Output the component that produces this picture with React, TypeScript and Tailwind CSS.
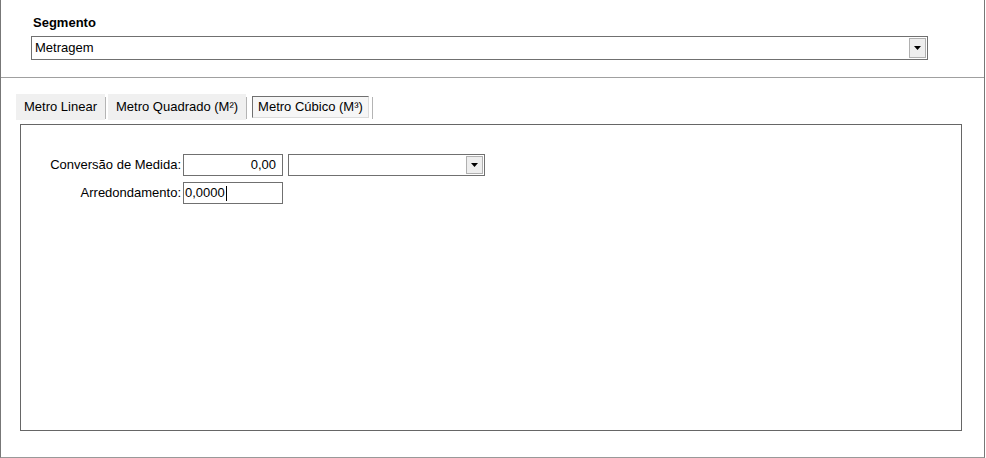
import React from "react";

function Arrow() {
  return (
    <svg width="7" height="4" viewBox="0 0 7 4">
      <path d="M0 0h7L3.5 4z" fill="#000" />
    </svg>
  );
}

function SelectBox({ value, className }: { value?: string; className: string }) {
  return (
    <div className={`flex items-stretch border border-[#707070] bg-white ${className}`}>
      <div className="flex flex-1 items-center pl-[3px] text-[13px] text-black">{value}</div>
      <div className="m-px flex w-[17px] items-center justify-center border border-[#b0b0b0] bg-[#eeeeee]">
        <Arrow />
      </div>
    </div>
  );
}

const tabs = ["Metro Linear", "Metro Quadrado (M²)", "Metro Cúbico (M³)"];

export default function App() {
  const active = 2;
  return (
    <div
      className="h-[458px] w-[985px] border-x border-b border-x-[#777] border-b-[#999] bg-white text-black"
      style={{ fontFamily: '"Liberation Sans", Arial, sans-serif' }}
    >
      <div className="px-[30px] pt-[15px]">
        <div className="pl-[2px] text-[13px] font-bold leading-[16px]">Segmento</div>
        <SelectBox value="Metragem" className="mt-[5px] h-[24px] w-[897px]" />
      </div>
      <div className="mt-[17px] h-px bg-[#a0a0a0]" />

      <div className="ml-[15px] mt-[16px] flex h-[27px] items-start">
        {tabs.map((t, i) => (
          <React.Fragment key={t}>
            {i === active ? (
              <div className="ml-[5px] mr-[3px] mt-[2px] flex h-[22px] items-center border border-t-[#707070] border-l-[#707070] border-r-[#dcdcdc] border-b-[#dcdcdc] bg-[#f6f6f6] px-[5px] text-[13px]">
                {t}
              </div>
            ) : (
              <div className="flex h-[26px] items-center bg-[#f0f0f0] px-[8px] text-[13px]">{t}</div>
            )}
            <div className="mt-[3px] h-[22px] w-px bg-[#b4b4b4]" />
            {i === 0 && <div className="w-[2px]" />}
          </React.Fragment>
        ))}
      </div>

      <div className="ml-[19px] mt-[3px] h-[307px] w-[942px] border border-[#666] pt-[29px]">
        <div className="flex items-center">
          <div className="w-[160px] text-right text-[13px]">Conversão de Medida:</div>
          <div className="ml-[2px] flex h-[22px] w-[100px] items-center justify-end border border-[#707070] pr-[6px] text-[13px]">
            0,00
          </div>
          <SelectBox className="ml-[5px] h-[22px] w-[197px]" />
        </div>
        <div className="mt-[6px] flex items-center">
          <div className="w-[160px] text-right text-[13px]">Arredondamento:</div>
          <div className="ml-[2px] flex h-[22px] w-[100px] items-center border border-[#707070] pl-[1px] text-[13px]">
            0,0000<span className="ml-px inline-block h-[15px] w-px bg-black" />
          </div>
        </div>
      </div>
    </div>
  );
}
